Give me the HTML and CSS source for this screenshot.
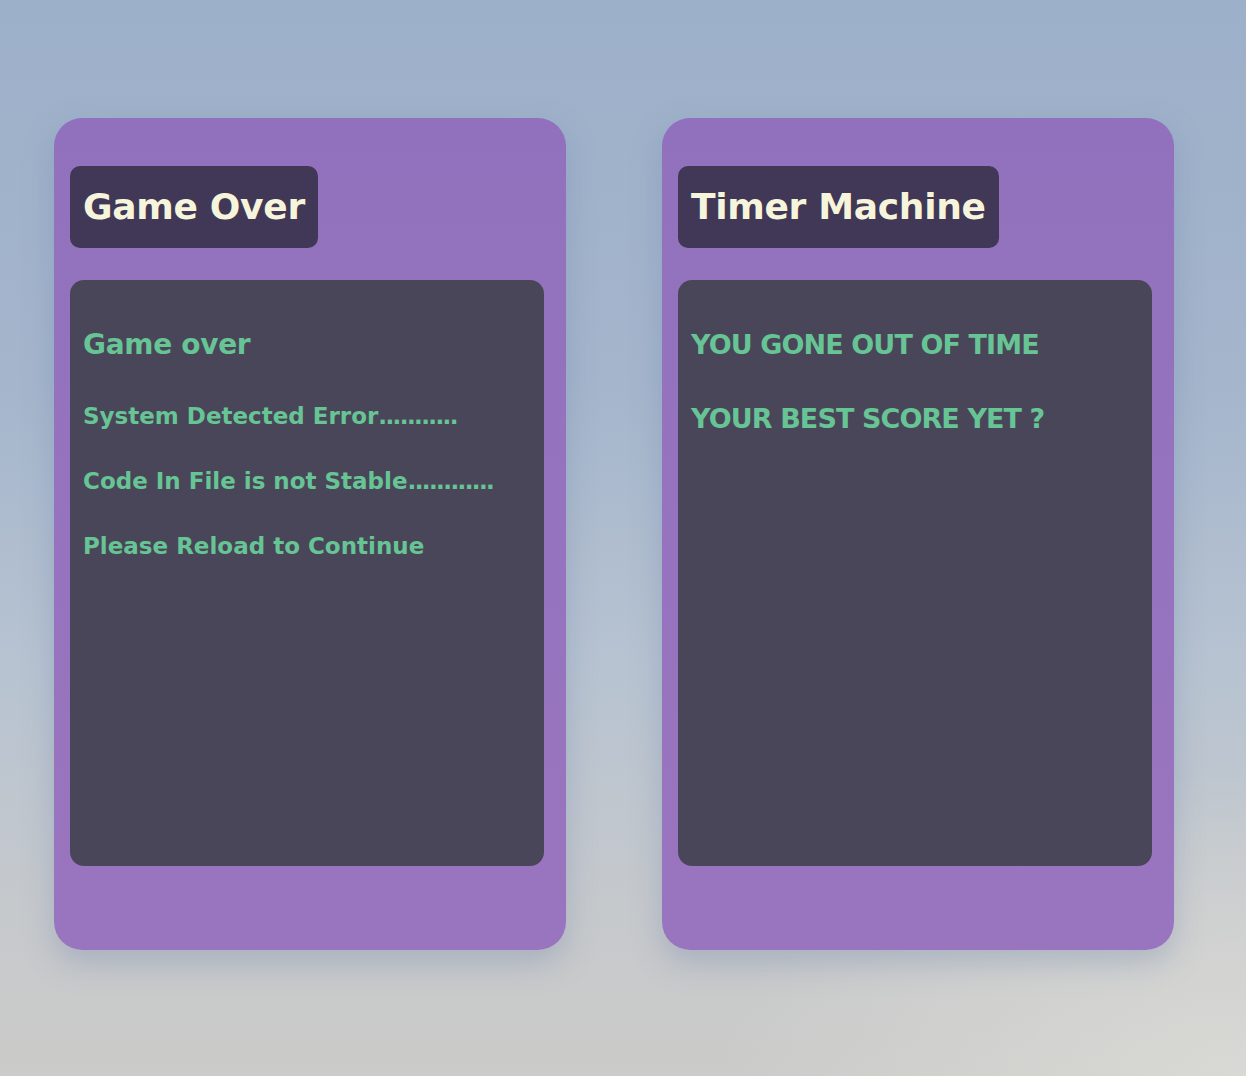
FILE: index.html
```html
<!DOCTYPE html>
<html lang="en">
<head>
<meta charset="utf-8">
<title>Game Over</title>
<link rel="stylesheet" href="styles.css">
</head>
<body>
<main class="stage">
  <section class="card">
    <h1 class="card-title">Game Over</h1>
    <div class="screen">
      <h2 class="screen-head">Game over</h2>
      <p class="line">System Detected Error<span class="dots">...........</span></p>
      <p class="line">Code In File is not Stable<span class="dots">............</span></p>
      <p class="line">Please Reload to Continue</p>
    </div>
  </section>
  <section class="card">
    <h1 class="card-title">Timer Machine</h1>
    <div class="screen">
      <h2 class="screen-head caps">YOU GONE OUT OF TIME</h2>
      <h2 class="screen-head caps second">YOUR BEST SCORE YET ?</h2>
    </div>
  </section>
</main>
</body>
</html>
```
FILE: styles.css
```css
html, body {
  margin: 0;
  height: 100%;
}
body {
  font-family: "DejaVu Sans", "Noto Sans", sans-serif;
  background:
    radial-gradient(ellipse 60% 40% at 100% 100%, rgba(218,218,214,0.9), rgba(218,218,214,0) 70%),
    linear-gradient(180deg, #9db0c9 0%, #a4b5cc 35%, #b7c3d1 62%, #c6c9cc 85%, #cbcbc9 100%);
  overflow: hidden;
}
.stage {
  display: flex;
  gap: 96px;
  padding: 118px 0 0 54px;
}
.card {
  width: 512px;
  height: 832px;
  box-sizing: border-box;
  padding: 48px 22px 0 16px;
  border-radius: 28px;
  background: linear-gradient(180deg, #9171bd 0%, #9a75bf 100%);
  box-shadow: 0 12px 30px rgba(110, 130, 170, 0.35);
}
.card-title {
  display: inline-block;
  margin: 0;
  height: 82px;
  line-height: 82px;
  padding: 0 13px;
  border-radius: 10px;
  background: #413857;
  color: #f6f5dc;
  font-size: 36px;
  font-weight: bold;
  letter-spacing: -0.3px;
}
.screen {
  margin-top: 32px;
  height: 586px;
  box-sizing: border-box;
  padding: 48px 13px 0;
  border-radius: 14px;
  background: #4a4659;
  color: #66c495;
}
.screen-head {
  margin: 0;
  font-size: 28px;
  line-height: 34px;
  font-weight: bold;
  letter-spacing: -0.3px;
}
.screen-head.caps {
  font-size: 27px;
  letter-spacing: -0.9px;
}
.screen-head.second {
  margin-top: 40px;
}
.line {
  margin: 42px 0 0;
  font-size: 23px;
  line-height: 24px;
  font-weight: bold;
  letter-spacing: 0;
}
.line + .line {
  margin-top: 41px;
}
.dots {
  letter-spacing: -1.6px;
}
```
